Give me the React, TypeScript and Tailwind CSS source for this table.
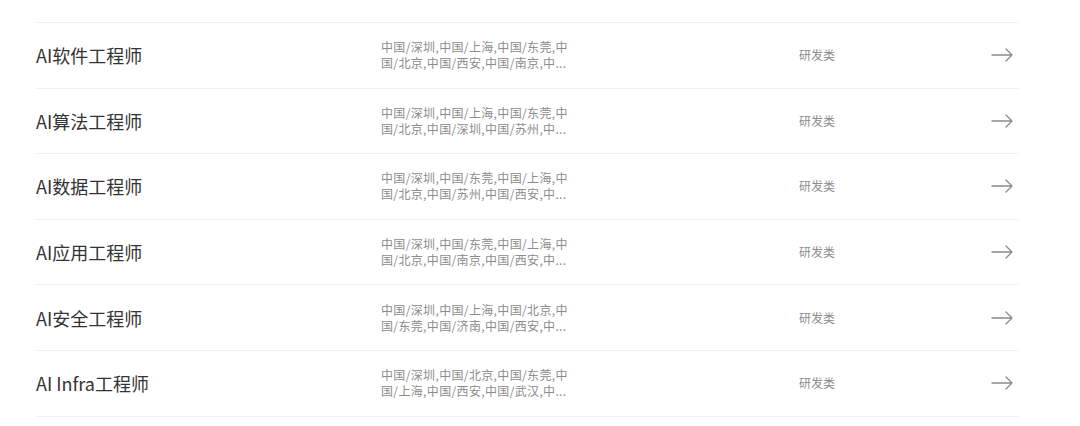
const jobs = [
  { title: "AI软件工程师", places: "中国/深圳,中国/上海,中国/东莞,中国/北京,中国/西安,中国/南京,中..." },
  { title: "AI算法工程师", places: "中国/深圳,中国/上海,中国/东莞,中国/北京,中国/深圳,中国/苏州,中..." },
  { title: "AI数据工程师", places: "中国/深圳,中国/东莞,中国/上海,中国/北京,中国/苏州,中国/西安,中..." },
  { title: "AI应用工程师", places: "中国/深圳,中国/东莞,中国/上海,中国/北京,中国/南京,中国/西安,中..." },
  { title: "AI安全工程师", places: "中国/深圳,中国/上海,中国/北京,中国/东莞,中国/济南,中国/西安,中..." },
  { title: "AI Infra工程师", places: "中国/深圳,中国/北京,中国/东莞,中国/上海,中国/西安,中国/武汉,中..." },
];

const ArrowIcon = () => (
  <svg width="22" height="14" viewBox="0 0 22 14" fill="none" stroke="#8a8a8a" strokeWidth="1.3" strokeLinecap="round" strokeLinejoin="round">
    <path d="M1 7h20M15 1l6 6-6 6" />
  </svg>
);

const App = () => {
  return (
    <div className="w-[1080px] h-[426px] bg-white font-['Noto_Sans_CJK_SC','Noto_Sans',sans-serif] pt-[22px]">
      <ul className="ml-[36px] w-[983px] border-t border-[#f0f0f0]">
        {jobs.map((job) => (
          <li key={job.title} className="h-[65.6px] border-b border-[#f0f0f0] flex items-center cursor-pointer">
            <div className="w-[345px] text-[18px] leading-[24px] text-[#333]">{job.title}</div>
            <div className="w-[418px]">
              <p className="w-[194px] text-[12px] leading-[16px] tracking-[0.35px] text-[#8c8c8c] break-all">
                {job.places}
              </p>
            </div>
            <div className="flex-1 text-[12px] text-[#8c8c8c]">研发类</div>
            <div className="pr-[6px] flex items-center">
              <ArrowIcon />
            </div>
          </li>
        ))}
      </ul>
    </div>
  );
};

export default App;
